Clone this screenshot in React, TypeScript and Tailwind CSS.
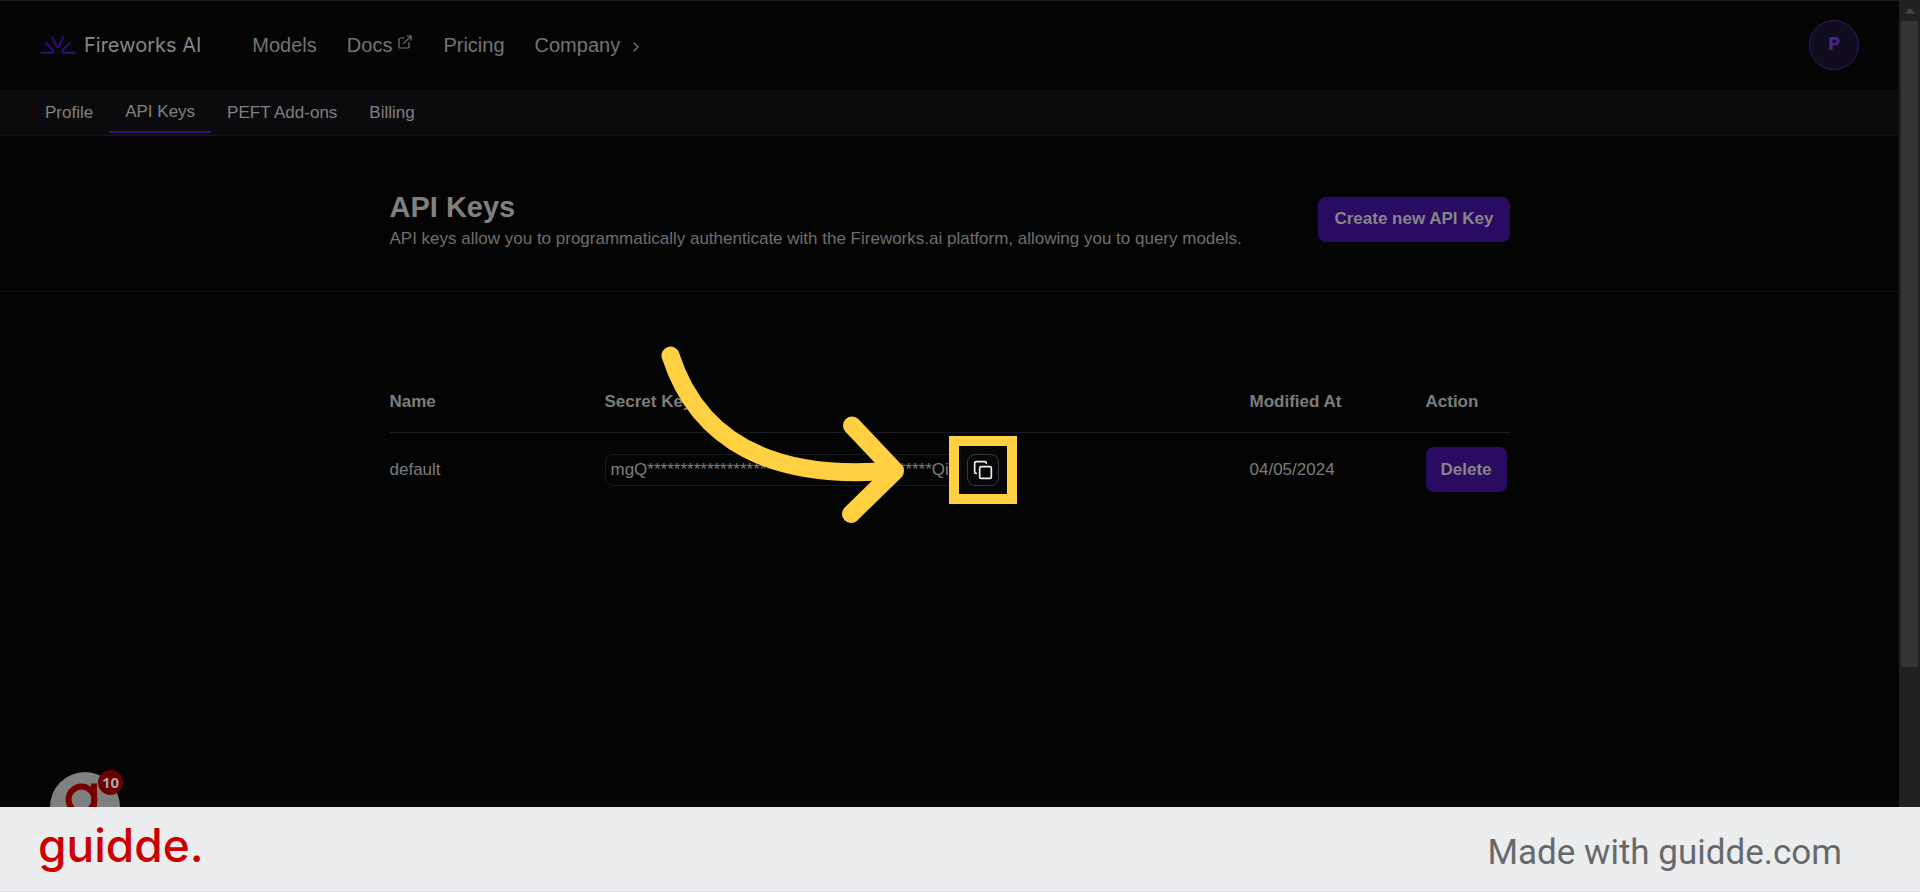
import React from "react";
import { ChevronRight, Copy, ExternalLink } from "lucide-react";

const tabs = [
  { label: "Profile", active: false },
  { label: "API Keys", active: true },
  { label: "PEFT Add-ons", active: false },
  { label: "Billing", active: false },
];

const secretKey = "mgQ" + "*".repeat(43) + "Qi";

function FireworksMark() {
  return (
    <svg
      width="36"
      height="20"
      viewBox="0 0 36 20"
      fill="none"
      stroke="#2b0c6b"
      strokeWidth="2.4"
      strokeLinejoin="round"
      aria-hidden="true"
    >
      <path d="M12 1.5 16.4 11.2Q17.7 13 19 11.2L23.4 1.5" />
      <path d="M5.5 7.5 12.6 14.6Q14 17.7 11 17.7H0.5" />
      <path d="M30.5 7.5 23 14.6Q21.4 17.7 24.4 17.7H35.5" />
    </svg>
  );
}

function Header() {
  return (
    <header className="flex h-[90px] items-center justify-between border-t border-[#20181f] bg-[#050505] px-10 pb-[2px]">
      <div className="flex items-center gap-[51px]">
        <a href="#" className="flex items-center gap-2 font-['Inter',sans-serif] text-[20px] text-[#868686]">
          <FireworksMark />
          Fireworks AI
        </a>
        <nav className="flex items-center gap-[30px] text-[20px] text-[#747474]">
          <a href="#">Models</a>
          <a href="#" className="flex items-start gap-[5px]">
            Docs
            <ExternalLink size={16} strokeWidth={1.8} className="mt-1" />
          </a>
          <a href="#">Pricing</a>
          <button type="button" className="flex items-center gap-2">
            Company
            <ChevronRight size={16} strokeWidth={2} className="mt-1" />
          </button>
        </nav>
      </div>
      <button
        type="button"
        className="flex size-[50px] items-center justify-center rounded-full border border-[#33196b] bg-[#120c1f] font-['DejaVu_Sans',sans-serif] text-[17px] font-bold text-[#45258c]"
      >
        P
      </button>
    </header>
  );
}

function SubNav() {
  return (
    <nav className="flex h-[46px] items-center border-y border-t-[#0e0e10] border-b-[#131315] bg-[#0b0b0d] pl-[29px] text-[17px] text-[#808080]">
      {tabs.map((tab) => (
        <a
          key={tab.label}
          href="#"
          className={
            tab.active
              ? "flex h-10 items-center border-b-2 border-[#360f86] px-4"
              : "flex h-10 items-center px-4"
          }
        >
          {tab.label}
        </a>
      ))}
    </nav>
  );
}

function PageHeading() {
  return (
    <section className="border-b border-[#111113] pt-[49px] pb-[38px]">
      <div className="mx-auto flex max-w-[1120px] items-center justify-between">
        <div className="pt-1">
          <h1 className="text-[29px] leading-9 font-bold text-[#808080]">API Keys</h1>
          <p className="text-[17px] leading-7 text-[#6e6e6e]">
            API keys allow you to programmatically authenticate with the Fireworks.ai platform, allowing you to query
            models.
          </p>
        </div>
        <button type="button" className="h-[45px] rounded-lg bg-[#290b62] px-4 text-[17px] font-bold text-[#868686]">
          Create new API Key
        </button>
      </div>
    </section>
  );
}

function CopyKey() {
  return (
    <div className="relative">
      <div className="absolute -inset-[18px] border-10 border-[#ffd042] bg-[#07070a]" />
      <button
        type="button"
        aria-label="Copy"
        className="relative flex size-8 items-center justify-center rounded-lg border border-[#37373b] text-[#eeeeee]"
      >
        <Copy size={20} strokeWidth={2} />
      </button>
      <svg
        className="pointer-events-none absolute right-[91px] -bottom-[38px]"
        width="250"
        height="180"
        viewBox="658 343 250 180"
        fill="none"
        stroke="#ffd042"
        strokeWidth="18"
        strokeLinecap="round"
        strokeLinejoin="round"
        aria-hidden="true"
      >
        <path d="M670.5 354.5C698 440 772 480 893 469.5" />
        <path d="M852 424.500 895 470 851 513" />
      </svg>
    </div>
  );
}

function KeysTable() {
  return (
    <section className="mx-auto w-full max-w-[1120px] pt-[79px]">
      <table className="w-full table-fixed text-left text-[17px] text-[#7c7c7c]">
        <colgroup>
          <col className="w-[215px]" />
          <col />
          <col className="w-[176px]" />
          <col className="w-[84px]" />
        </colgroup>
        <thead>
          <tr className="h-[61px] border-b border-[#1c1c1e] font-bold">
            <th>Name</th>
            <th>Secret Key</th>
            <th>Modified At</th>
            <th>Action</th>
          </tr>
        </thead>
        <tbody>
          <tr className="h-[75px]">
            <td>default</td>
            <td>
              <div className="flex items-center gap-1">
                <input
                  aria-label="Secret Key"
                  readOnly
                  value={secretKey}
                  className="h-8 w-[358px] rounded-lg border border-[#1a1a1c] bg-transparent px-[5px]"
                />
                <CopyKey />
              </div>
            </td>
            <td>04/05/2024</td>
            <td>
              <button type="button" className="h-[45px] rounded-lg bg-[#290b62] px-[15px] font-bold text-[#868686]">
                Delete
              </button>
            </td>
          </tr>
        </tbody>
      </table>
    </section>
  );
}

function GuiddeWidget() {
  return (
    <div className="absolute -bottom-[35px] left-[50px] size-[70px] rounded-full bg-[#808080]">
      <svg width="70" height="70" viewBox="0 0 70 70" fill="none" stroke="#760000" strokeWidth="6" aria-hidden="true">
        <circle cx="31.500" cy="27.500" r="13" />
        <path d="M44 11.500V42" />
      </svg>
      <span className="absolute -top-[2px] left-12 flex size-[25px] items-center justify-center rounded-full bg-[#6b0000] font-['Open_Sans',sans-serif] text-[15px] font-bold text-[#a6a6a6]">
        10
      </span>
    </div>
  );
}

function Scrollbar() {
  return (
    <div className="flex w-[21px] shrink-0 flex-col items-center bg-[#212121]" aria-hidden="true">
      <div className="flex h-[21px] items-center">
        <svg width="10" height="6" viewBox="0 0 10 6" fill="#484848">
          <path d="M5 0 10 5.500H0Z" />
        </svg>
      </div>
      <div className="w-[17px] basis-[80%] bg-[#343434]" />
    </div>
  );
}

function Footer() {
  return (
    <footer className="flex h-[85px] shrink-0 items-center justify-between border-b border-[#dcdde0] bg-[#ecedef] pr-[78px] pl-[38px]">
      <span className="pb-2 font-['Inter',sans-serif] text-[46px] leading-none font-medium text-[#cc0000]">guidde.</span>
      <span className="pt-2 font-['Roboto',sans-serif] text-[35px] text-[#68696b]">Made with guidde.com</span>
    </footer>
  );
}

export default function App() {
  return (
    <div className="flex min-h-screen flex-col bg-[#040404] font-['Liberation_Sans',Arial,sans-serif]">
      <div className="flex flex-1">
        <main className="relative flex-1 overflow-hidden">
          <Header />
          <SubNav />
          <PageHeading />
          <KeysTable />
          <GuiddeWidget />
        </main>
        <Scrollbar />
      </div>
      <Footer />
    </div>
  );
}
